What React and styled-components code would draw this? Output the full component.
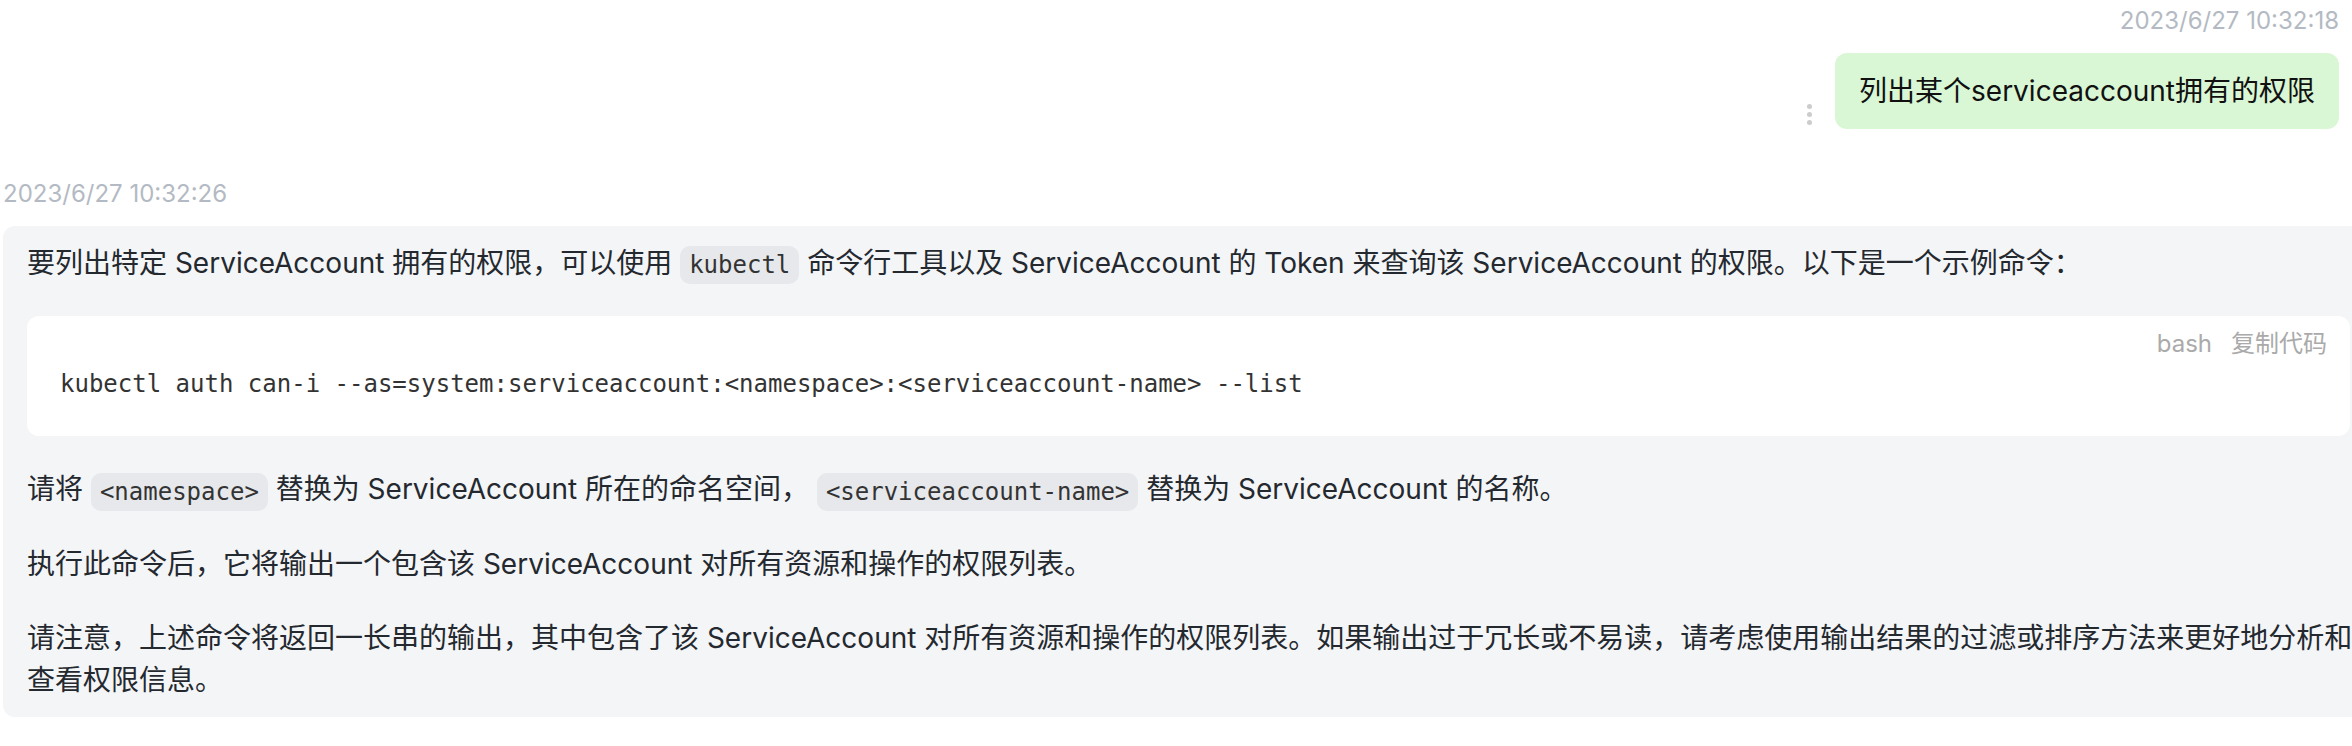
import React from "react";
import styled, { createGlobalStyle } from "styled-components";

const GlobalStyle = createGlobalStyle`
  html, body {
    margin: 0;
    padding: 0;
    background: #ffffff;
    overflow: hidden;
  }
  body {
    font-family: Inter, "Noto Sans CJK SC", sans-serif;
    color: #24292f;
  }
`;

const Page = styled.div`
  display: flex;
  flex-direction: column;
  padding: 6px 13px 0 3px;
`;

const Stamp = styled.div`
  font-size: 24px;
  line-height: 30px;
  color: #b4bac3;
  text-align: ${(p) => (p.$right ? "right" : "left")};
  margin-top: ${(p) => p.$top || 0}px;
`;

const UserRow = styled.div`
  display: flex;
  justify-content: flex-end;
  align-items: flex-end;
  margin-top: 17px;
`;

const Dots = styled.div`
  display: flex;
  flex-direction: column;
  gap: 3px;
  margin: 0 23px 4px 0;

  span {
    width: 5px;
    height: 5px;
    border-radius: 50%;
    background: #cccccc;
  }
`;

const UserBubble = styled.div`
  background: #d9f7d4;
  border-radius: 12px;
  padding: 18px 24px;
  font-size: 28px;
  line-height: 40px;
  color: #111;
`;

const BotBubble = styled.div`
  display: flex;
  flex-direction: column;
  gap: 32px;
  margin: 17px -35px 0 0;
  padding: 16px 24px;
  background: #f4f5f7;
  border-radius: 12px;
`;

const Para = styled.p`
  margin: 0 -14px 0 0;
  font-size: 28px;
  line-height: 42px;
`;

const InlineCode = styled.code`
  display: inline-block;
  vertical-align: middle;
  padding: 0 9px;
  line-height: 38px;
  border-radius: 10px;
  background: #e6e8eb;
  font-family: "DejaVu Sans Mono", monospace;
  font-size: 24px;
  color: #333;
`;

const CodeBlock = styled.div`
  background: #ffffff;
  border-radius: 12px;
  padding: 8px 23px 32px 33px;
`;

const CodeHead = styled.div`
  display: flex;
  justify-content: flex-end;
  gap: 19px;
  font-size: 24px;
  line-height: 40px;
  color: #aaaaaa;
`;

const Pre = styled.pre`
  margin: 0;
  font-family: "DejaVu Sans Mono", monospace;
  font-size: 24px;
  line-height: 40px;
  color: #333;
`;

export default function App() {
  return (
    <>
      <GlobalStyle />
      <Page>
        <Stamp $right>2023/6/27 10:32:18</Stamp>
        <UserRow>
          <Dots>
            <span />
            <span />
            <span />
          </Dots>
          <UserBubble>列出某个serviceaccount拥有的权限</UserBubble>
        </UserRow>

        <Stamp $top={50}>2023/6/27 10:32:26</Stamp>
        <BotBubble>
          <Para>
            要列出特定 ServiceAccount 拥有的权限，可以使用 <InlineCode>kubectl</InlineCode> 命令行工具以及
            ServiceAccount 的 Token 来查询该 ServiceAccount 的权限。以下是一个示例命令：
          </Para>
          <CodeBlock>
            <CodeHead>
              <span>bash</span>
              <span>复制代码</span>
            </CodeHead>
            <Pre>kubectl auth can-i --as=system:serviceaccount:&lt;namespace&gt;:&lt;serviceaccount-name&gt; --list</Pre>
          </CodeBlock>
          <Para>
            请将 <InlineCode>&lt;namespace&gt;</InlineCode> 替换为 ServiceAccount 所在的命名空间，{" "}
            <InlineCode>&lt;serviceaccount-name&gt;</InlineCode> 替换为 ServiceAccount 的名称。
          </Para>
          <Para>执行此命令后，它将输出一个包含该 ServiceAccount 对所有资源和操作的权限列表。</Para>
          <Para>
            请注意，上述命令将返回一长串的输出，其中包含了该 ServiceAccount
            对所有资源和操作的权限列表。如果输出过于冗长或不易读，请考虑使用输出结果的过滤或排序方法来更好地分析和查看权限信息。
          </Para>
        </BotBubble>
      </Page>
    </>
  );
}
